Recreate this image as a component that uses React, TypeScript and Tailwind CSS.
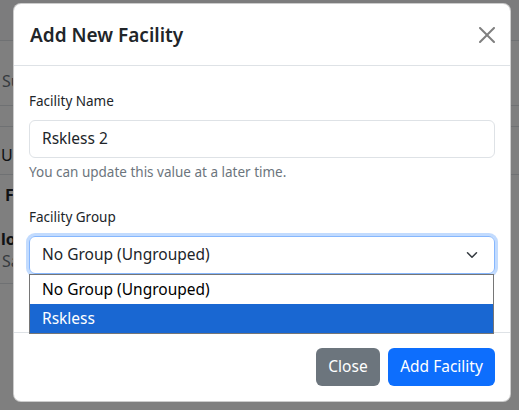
import { useState } from "react";

const groups = ["No Group (Ungrouped)", "Rskless"];

function CloseIcon() {
  return (
    <svg viewBox="0 0 16 16" className="h-4 w-4" fill="currentColor">
      <path d="M.293.293a1 1 0 0 1 1.414 0L8 6.586 14.293.293a1 1 0 1 1 1.414 1.414L9.414 8l6.293 6.293a1 1 0 0 1-1.414 1.414L8 9.414l-6.293 6.293a1 1 0 0 1-1.414-1.414L6.586 8 .293 1.707a1 1 0 0 1 0-1.414z" />
    </svg>
  );
}

function Chevron() {
  return (
    <svg viewBox="0 0 16 16" className="h-3 w-4" fill="none" stroke="#343a40" strokeWidth="2" strokeLinecap="round" strokeLinejoin="round">
      <path d="m2 5 6 6 6-6" />
    </svg>
  );
}

export default function App() {
  const [name] = useState("Rskless 2");
  const [group] = useState(groups[0]);

  return (
    <div className="relative h-[410px] w-[519px] overflow-hidden bg-white font-['Noto_Sans',sans-serif] text-[#212529]">
      {/* page behind the dialog; the text column is narrow, the rows run full width */}
      <div className="flex flex-col text-[16px]">
        <div className="h-[41px] border-b border-[#dee2e6] bg-[#f8f9fa]" />
        <div className="flex h-[65px] items-end border-b border-[#dee2e6] pb-[12px]">
          <span className="w-[13px] overflow-hidden whitespace-nowrap pl-[2px] text-[#6c757d]">Sum</span>
        </div>
        <div className="h-[21px] border-b border-[#dee2e6]" />
        <div className="flex h-[48px] items-end border-b border-[#dee2e6] pb-[7px]">
          <span className="w-[13px] overflow-hidden whitespace-nowrap pl-[1px]">Up</span>
        </div>
        <div className="flex h-[109px] w-[13px] flex-col overflow-hidden whitespace-nowrap border-b border-[#dee2e6] pt-[8px]">
          <span className="pl-[5px] font-bold">Fa</span>
          <span className="mt-[20px] pl-[1px] font-bold">lo</span>
          <span className="pl-[2px] leading-[20px] text-[#6c757d]">Sa</span>
        </div>
      </div>

      {/* backdrop + dialog */}
      <div className="absolute inset-0 bg-black/50 pl-[13px] pt-[3px]">
        <div className="w-[498px] rounded-lg border border-black/20 bg-white">
          <div className="flex h-[62px] items-center justify-between border-b border-[#dee2e6] pl-4 pr-[15px]">
            <h5 className="text-[19px] font-semibold leading-[30px]">Add New Facility</h5>
            <button className="text-black/50">
              <CloseIcon />
            </button>
          </div>

          <div className="px-[15px] pb-[58px] pt-[25px]">
            <label className="mb-2 block text-[13.5px] leading-[21px]">Facility Name</label>
            <div className="flex h-[38px] items-center rounded-md border border-[#dee2e6] px-3 text-[15.5px]">{name}</div>
            <div className="mt-1 text-[13.5px] leading-[21px] text-[#6c757d]">You can update this value at a later time.</div>

            <label className="mb-2 mt-6 block text-[13.5px] leading-[21px]">Facility Group</label>
            <div className="relative">
              <div className="flex h-[38px] items-center justify-between rounded-md border border-[#86b7fe] pl-3 pr-[14px] text-[15.5px] shadow-[0_0_0_3px_rgba(13,110,253,0.25)]">
                <span>{group}</span>
                <Chevron />
              </div>
              <ul className="absolute left-0 right-[1px] top-full border border-[#767676] bg-white text-[15.5px] text-black">
                {groups.map((g, i) => (
                  <li
                    key={g}
                    className={i === 1 ? "flex h-[29px] items-center bg-[#1967d2] px-3 text-white" : "flex h-[29px] items-center px-3"}
                  >
                    {g}
                  </li>
                ))}
              </ul>
            </div>
          </div>

          <div className="flex justify-end gap-2 border-t border-[#dee2e6] pb-[15px] pr-[15px] pt-[15px]">
            <button className="h-[38px] w-[64px] rounded-md bg-[#6c757d] text-[15.5px] text-white">Close</button>
            <button className="h-[38px] w-[107px] rounded-md bg-[#0d6efd] text-[15.5px] text-white">Add Facility</button>
          </div>
        </div>
      </div>
    </div>
  );
}
